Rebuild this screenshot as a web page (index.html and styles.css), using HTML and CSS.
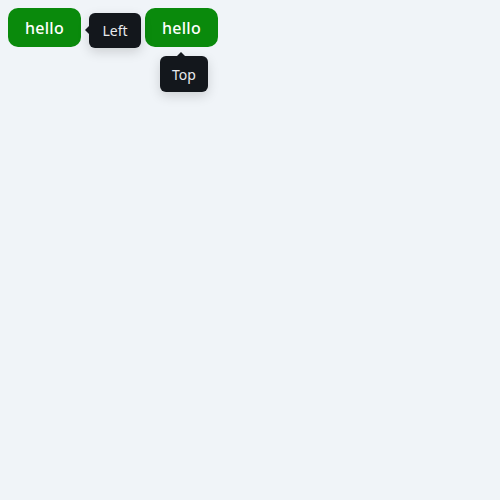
FILE: index.html
```html
<!DOCTYPE html>
<html>
<head>
<meta charset="utf-8">
<link rel="stylesheet" href="styles.css">
</head>
<body>
<div class="row">
  <button class="btn">hello</button>
  <div class="anchor">
    <button class="btn">hello</button>
    <div class="tip tip-left">Left</div>
    <div class="tip tip-top">Top</div>
  </div>
</div>
</body>
</html>
```
FILE: styles.css
```css
html, body {
  margin: 0;
  padding: 0;
  background: #f0f4f8;
  width: 500px;
  height: 500px;
}
body {
  font-family: "Noto Sans", "Open Sans", sans-serif;
}
.row {
  display: flex;
  gap: 64px;
  padding: 8px;
  align-items: flex-start;
}
.anchor {
  position: relative;
}
.btn {
  display: block;
  width: 73px;
  height: 39px;
  border: 0;
  border-radius: 10px;
  background: #0a8a0c;
  color: #fff;
  font-family: "Noto Sans", "Open Sans", sans-serif;
  font-size: 16px;
  font-weight: 500;
  letter-spacing: 0.3px;
  padding: 0;
  cursor: pointer;
}
.tip {
  position: absolute;
  background: #13171c;
  color: #e8eaed;
  font-size: 14px;
  border-radius: 6px;
  box-shadow: 0 4px 12px rgba(0,0,0,0.15);
  display: flex;
  align-items: center;
  justify-content: center;
}
.tip::before {
  content: "";
  position: absolute;
  width: 0;
  height: 0;
}
.tip-left {
  left: -56px;
  top: 5px;
  width: 52px;
  height: 35px;
}
.tip-left::before {
  left: -4px;
  top: 13px;
  border-top: 4px solid transparent;
  border-bottom: 4px solid transparent;
  border-right: 4px solid #13171c;
}
.tip-top {
  left: 15px;
  top: 48px;
  width: 48px;
  height: 36px;
}
.tip-top::before {
  top: -4px;
  left: 17px;
  border-left: 4px solid transparent;
  border-right: 4px solid transparent;
  border-bottom: 4px solid #13171c;
}
```
